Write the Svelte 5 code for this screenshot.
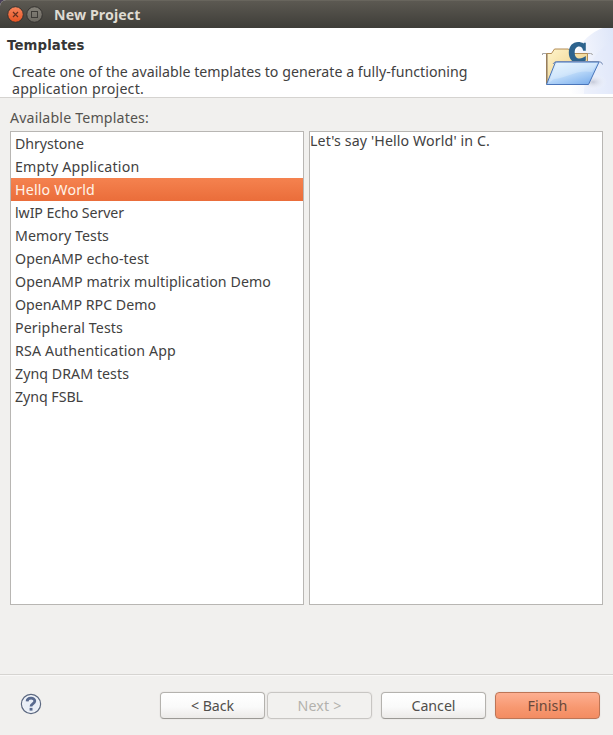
<script>
  const templates = [
    ['Dhrystone', 69], ['Empty Application', 124.5], ['Hello World', 80],
    ['lwIP Echo Server', 109], ['Memory Tests', 94], ['OpenAMP echo-test', 134],
    ['OpenAMP matrix multiplication Demo', 256], ['OpenAMP RPC Demo', 141],
    ['Peripheral Tests', 108], ['RSA Authentication App', 161],
    ['Zynq DRAM tests', 114], ['Zynq FSBL', 68]
  ];
  const buttons = [
    { label: '< Back', width: 43, kind: '' },
    { label: 'Next >', width: 44, kind: 'disabled' },
    { label: 'Cancel', width: 44, kind: 'gap' },
    { label: 'Finish', width: 40, kind: 'primary' }
  ];
  let selected = $state('Hello World');

  // Adjust tracking so that a label occupies its designed width.
  function fit(node, width) {
    const natural = node.getBoundingClientRect().width;
    node.style.letterSpacing = `${(width - natural) / node.textContent.length}px`;
  }
</script>

<div class="window">
  <header class="titlebar">
    <svg width="44" height="28" viewBox="0 0 44 28">
      <defs>
        <linearGradient id="close" x2="0" y2="1"><stop stop-color="#f7865d" /><stop offset="1" stop-color="#e65322" /></linearGradient>
        <linearGradient id="max" x2="0" y2="1"><stop stop-color="#858279" /><stop offset="1" stop-color="#6b6861" /></linearGradient>
      </defs>
      <circle cx="15.5" cy="14.5" r="7.8" fill="url(#close)" stroke="#353330" />
      <path d="m13 12 5 5m0-5-5 5" stroke="#65301f" stroke-width="1.2" />
      <circle cx="34.5" cy="14.5" r="7.8" fill="url(#max)" stroke="#353330" />
      <rect x="31.5" y="11.5" width="6" height="6" fill="none" stroke="#3d3b37" />
    </svg>
    <h1><span use:fit={86.5}>New Project</span></h1>
  </header>

  <section class="banner">
    <div class="copy">
      <h2><span use:fit={77.5}>Templates</span></h2>
      <p><span use:fit={455.5}>Create one of the available templates to generate a fully-functioning</span><br /><span use:fit={132}>application project.</span></p>
    </div>
    <svg class="art" width="80" height="69" viewBox="533 28 80 69">
      <defs>
        <linearGradient id="sky" x1="0" y1=".4" x2="1" y2=".2"><stop stop-color="#fff" /><stop offset=".45" stop-color="#f0f3fc" /><stop offset="1" stop-color="#dfe7f9" /></linearGradient>
        <linearGradient id="gold" x2="1" y2="1"><stop stop-color="#fff5cc" /><stop offset="1" stop-color="#e8c578" /></linearGradient>
        <linearGradient id="blue" x2=".7" y2="1"><stop stop-color="#e4f4ff" /><stop offset=".5" stop-color="#c5e0fb" /><stop offset="1" stop-color="#82b3ee" /></linearGradient>
        <radialGradient id="shade"><stop stop-color="#b7bbcb" stop-opacity=".7" /><stop offset="1" stop-color="#fff" stop-opacity="0" /></radialGradient>
      </defs>
      <path d="M613 28v66h-48c0-28 14-58 38-66Z" fill="url(#sky)" />
      <path d="M613 28v14c-17 7-28 25-29 52h29V28Z" fill="#e2e9fa" opacity=".45" />
      <ellipse cx="593" cy="82" rx="14" ry="8" fill="url(#shade)" />
      <path d="M542.5 55v-1.5h48q2 0 2 1.5" fill="none" stroke="#a5a5a5" />
      <path d="M546.5 84V53.5h5l3-4.5h14l3 4.5h16V80Z" fill="url(#gold)" stroke="#b28c56" />
      <path d="M547 84V54" stroke="#81705e" />
      <path d="M585.8 42.8v8h-2.6c-.7-3.2-2-4.4-4-4.4-3 0-4.5 2.4-4.5 6.1 0 4 1.9 6 4.8 6 2.5 0 4-.8 6.3-2.4v4.4c-2.2 1.6-4.5 2.4-7.3 2.4-5.9 0-9.7-3.9-9.7-10.2 0-6.5 3.8-10.6 9.4-10.6 2.2 0 3.8.5 5.4 1.5l.5-.8Z" fill="#2d638d" />
      <path d="m546.5 84.5 9-22.5H599l-10.5 22.5Z" fill="url(#blue)" stroke="#4975ba" stroke-linejoin="round" />
      <path d="m548.5 83 8.5-20h40l-5 9c-15-3-25 6-38 7Z" fill="#fff" opacity=".24" />
      <path d="M553 64c1-2 3-2.5 5-2.5h39q5 0 5.5 3" fill="none" stroke="#7289b4" />
    </svg>
  </section>

  <main>
    <div class="caption"><span use:fit={139}>Available Templates:</span></div>
    <div class="panes">
      <ul class="pane">
        {#each templates as [name, width]}
          <li><button class:selected={selected === name} onclick={() => (selected = name)}><span use:fit={width}>{name}</span></button></li>
        {/each}
      </ul>
      <div class="pane detail"><span use:fit={180}>Let's say 'Hello World' in C.</span></div>
    </div>
  </main>

  <footer>
    <svg class="help" width="22" height="22" viewBox="0 0 22 22">
      <circle cx="11" cy="11" r="9.6" fill="#f5f7fb" stroke="#5b6880" stroke-width="1.2" />
      <circle cx="11" cy="11" r="8" fill="#e9eef6" />
      <path d="M7.1 8.4C7.3 4.2 14.8 4.2 14.8 8.1c0 2.8-3.8 2.9-3.8 5.3" fill="none" stroke="#58698e" stroke-width="2.8" />
      <path d="M9.6 14.9h2.9v2.7H9.6Z" fill="#58698e" />
    </svg>
    {#each buttons as b}
      <button class="action {b.kind}" disabled={b.kind === 'disabled'}><span use:fit={b.width}>{b.label}</span></button>
    {/each}
  </footer>
</div>

<style>
  :global(body) { margin: 0; background: #4b4159; }
  .window { width: 613px; height: 735px; display: flex; flex-direction: column; overflow: hidden; background: #f1f0ee; border-radius: 6px 0 0 0; color: #42413f; font: 14.2px/17px 'Noto Sans', sans-serif; }
  span { white-space: pre; display: inline-block; }
  h1, h2, p, ul { margin: 0; padding: 0; }
  .titlebar { height: 28px; flex: none; display: flex; align-items: center; box-sizing: border-box; background: linear-gradient(#5c5952, #3e3d38); border-top: 1px solid #68655d; color: #dfdbd2; }
  .titlebar svg { margin-top: -1px; }
  h1 { font-size: 14.2px; line-height: 20px; margin: 0 0 0 10px; }
  .banner { height: 69px; flex: none; display: flex; background: #fff; border-bottom: 1px solid #d5d3d0; }
  .copy { width: 533px; }
  h2 { font-family: 'DejaVu Sans', sans-serif; font-size: 13.3px; line-height: 18px; padding: 9px 0 0 7px; color: #363636; }
  p { padding: 8px 0 0 12px; line-height: 17px; }
  main { padding: 11px 10px 0; height: 496px; flex: none; }
  .caption { height: 22px; line-height: 18px; color: #55534f; }
  .panes { display: flex; gap: 5px; }
  .pane { flex: 1; height: 474px; box-sizing: border-box; background: #fff; border: 1px solid #b8b6b3; list-style: none; }
  li { height: 23px; }
  li button { display: block; width: 100%; height: 23px; padding: 1px 0 0 4px; border: 0; background: none; color: inherit; font: inherit; line-height: 20px; text-align: left; }
  li button.selected { color: #fff3e9; background: linear-gradient(#f5824f, #ea6d3a); }
  .detail { line-height: 18px; }
  footer { margin-top: auto; height: 61px; box-sizing: border-box; border-top: 1px solid #d6d4d1; box-shadow: inset 0 1px #f9f8f7; display: flex; padding: 17px 13px 0 20px; }
  .help { margin: 1px 118px 0 0; }
  .action { width: 105px; height: 27px; margin: 0 2px 0 0; padding: 0; border: 1px solid #b4b2ae; border-bottom-color: #9b9995; border-radius: 4px; background: linear-gradient(#fff, #fafafa 55%, #eceae8); color: #504e4b; font: inherit; line-height: 23px; box-shadow: 0 0 0 1px #eceae8; }
  .disabled { color: #b3b1ad; border-color: #c8c6c3; background: #f2f1ef; }
  .gap { margin-left: 7px; }
  .primary { margin: 0 0 0 7px; border-color: #bd7556; background: linear-gradient(#fdaf91, #f7976f 60%, #f38c62); color: #69483b; }
</style>
